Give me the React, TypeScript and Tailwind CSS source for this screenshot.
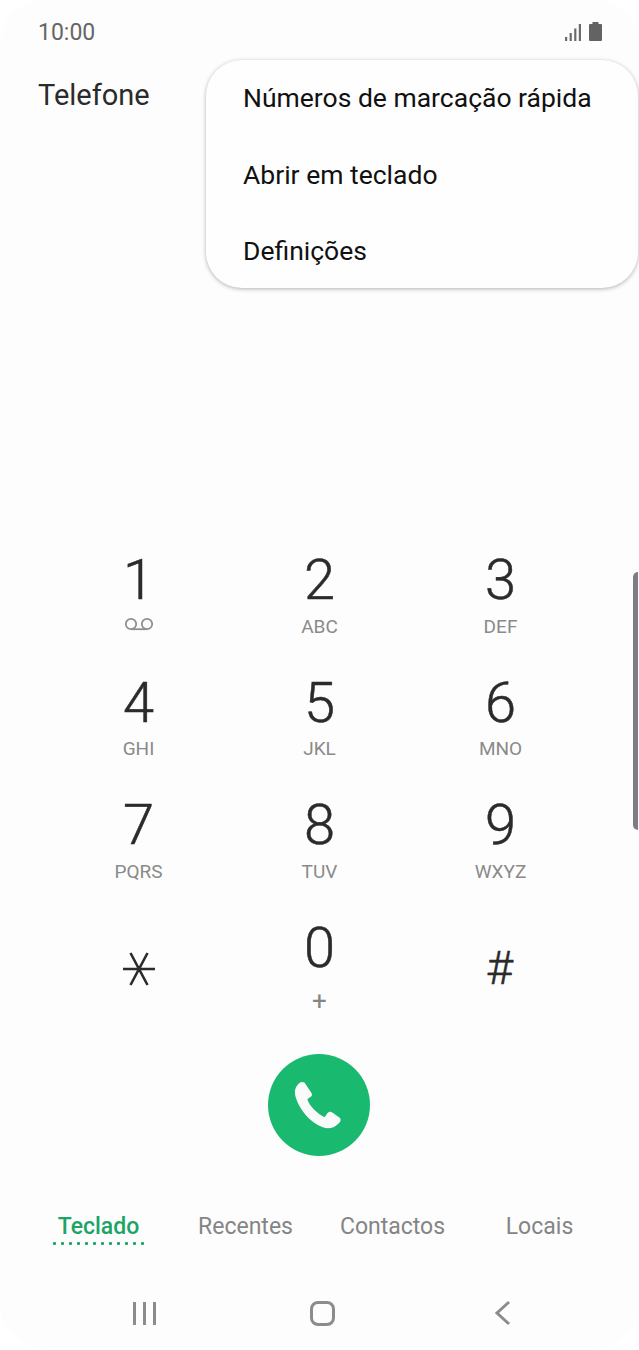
const keys = [
  { digit: '1', sub: '' },
  { digit: '2', sub: 'ABC' },
  { digit: '3', sub: 'DEF' },
  { digit: '4', sub: 'GHI' },
  { digit: '5', sub: 'JKL' },
  { digit: '6', sub: 'MNO' },
  { digit: '7', sub: 'PQRS' },
  { digit: '8', sub: 'TUV' },
  { digit: '9', sub: 'WXYZ' },
]

const tabs = ['Recentes', 'Contactos', 'Locais']
const dots = Array.from({ length: 12 }, (_, i) => i)

function Voicemail() {
  return (
    <svg className="-mt-[4px]" width="30" height="14" viewBox="0 0 30 14" fill="none" stroke="#8f8f8f" strokeWidth="1.8">
      <circle cx="7" cy="7" r="5.2" />
      <circle cx="23" cy="7" r="5.2" />
      <path d="M7 12.2h16" />
    </svg>
  )
}

function Star() {
  return (
    <svg width="34" height="36" viewBox="0 0 34 36" fill="none" stroke="#2b2b2b" strokeWidth="2.6">
      <path d="M1 18h32M8.5 2l17 32M25.5 2l-17 32" />
    </svg>
  )
}

function Handset() {
  return (
    <svg width="70" height="70" viewBox="0 0 210 210" fill="#fafafa">
      <path d="M36 52C42 38 54 32 62 38L82 68C86 74 84 78 78 82L70 88C76 108 100 132 122 142L130 130C134 124 140 124 146 128L168 144C172 150 170 156 162 162C150 174 134 178 116 172C76 156 44 116 34 78C32 68 32 60 36 52Z" />
    </svg>
  )
}

export default function App() {
  return (
    <div className="relative w-[639px] h-[1350px] overflow-hidden bg-white font-['Roboto',sans-serif]">
      <div className="flex flex-col h-[1348px] rounded-[44px] bg-[#fdfdfd]">
        {/* Status bar */}
        <div className="flex items-center justify-between h-[64px] pl-[38px] pr-[37px]">
          <span className="text-[23px] leading-none text-[#666666]">10:00</span>
          <div className="flex items-end gap-[8px] pb-[2px]">
            <svg width="16" height="17" viewBox="0 0 16 17" fill="#6b6b6b">
              <rect x="0" y="13" width="2.2" height="4" />
              <rect x="4.6" y="9" width="2.2" height="8" />
              <rect x="9.2" y="4.5" width="2.2" height="12.5" />
              <rect x="13.8" y="0" width="2.2" height="17" />
            </svg>
            <svg width="13" height="19" viewBox="0 0 13 19" fill="#636363">
              <path d="M3.5 0h6v2H12a1 1 0 0 1 1 1v15a1 1 0 0 1-1 1H1a1 1 0 0 1-1-1V3a1 1 0 0 1 1-1h2.5z" />
            </svg>
          </div>
        </div>

        <div className="pl-[38px] pt-[13px] h-[485px]">
          <span className="text-[29px] leading-[36px] text-[#2b2b2b]">Telefone</span>
        </div>

        {/* Keypad */}
        <div className="grid grid-cols-3 px-[48px]">
          {keys.map((k) => (
            <div key={k.digit} className="flex flex-col items-center h-[122.7px]">
              <span className="h-[62px] text-[56px] leading-[62px] font-light text-[#2b2b2b] [-webkit-text-stroke:0.5px_#2b2b2b]">
                {k.digit}
              </span>
              <span className="flex items-center h-[30px] text-[19px] leading-none text-[#8a8a8a]">
                {k.sub || <Voicemail />}
              </span>
            </div>
          ))}
          <div className="flex justify-center items-start pt-[34px] h-[122px]">
            <Star />
          </div>
          <div className="flex flex-col items-center h-[122px]">
            <span className="h-[62px] text-[56px] leading-[62px] font-light text-[#2b2b2b] [-webkit-text-stroke:0.5px_#2b2b2b]">
              0
            </span>
            <span className="flex items-center h-[30px] mt-[7px] text-[26px] leading-none text-[#858585]">+</span>
          </div>
          <div className="flex justify-center items-start pt-[26px] pr-[2px] h-[122px]">
            <span className="text-[47px] leading-[50px] font-light text-[#2b2b2b] [-webkit-text-stroke:0.4px_#2b2b2b]">#</span>
          </div>
        </div>

        {/* Call button */}
        <div className="flex justify-center pt-[15px] pr-[1px]">
          <div className="flex items-center justify-center w-[102px] h-[102px] rounded-full bg-[#1ab970]">
            <Handset />
          </div>
        </div>

        {/* Tabs */}
        <div className="flex mt-[56px] pl-[25px] pr-[26px]">
          <div className="flex-1 flex flex-col items-center h-[30px]">
            <span className="text-[23px] leading-[30px] font-medium text-[#1ba466]">Teclado</span>
            <div className="flex gap-[5px]">
              {dots.map((d) => (
                <div key={d} className="w-[3px] h-[3px] rounded-[1px] bg-[#1ba466]" />
              ))}
            </div>
          </div>
          {tabs.map((t) => (
            <div key={t} className="flex-1 text-center text-[23px] leading-[30px] text-[#858585]">
              {t}
            </div>
          ))}
        </div>

        {/* Navigation bar */}
        <div className="flex items-center mt-[57px] h-[28px] pl-[133px]">
          <div className="flex gap-[7px] w-[23px]">
            <div className="w-[3px] h-[23px] bg-[#8c8c8c]" />
            <div className="w-[3px] h-[23px] bg-[#8c8c8c]" />
            <div className="w-[3px] h-[23px] bg-[#8c8c8c]" />
          </div>
          <div className="ml-[154px] w-[25px] h-[25px] rounded-[8px] border-[3px] border-[#8c8c8c]" />
          <svg className="ml-[159px]" width="18" height="26" viewBox="0 0 18 26" fill="none" stroke="#8c8c8c" strokeWidth="3">
            <path d="M15 2L3 13l12 11" />
          </svg>
        </div>
      </div>

      {/* Overflow menu */}
      <div className="absolute left-[206px] top-[60px] w-[432px] h-[228px] rounded-[36px] bg-[#fefefe] pl-[37px] shadow-[0_1px_4px_rgba(0,0,0,0.3)]">
        {['Números de marcação rápida', 'Abrir em teclado', 'Definições'].map((item) => (
          <div key={item} className="flex items-center h-[76.5px] text-[26.5px] text-[#111111]">
            {item}
          </div>
        ))}
      </div>

      {/* Scroll handle */}
      <div className="absolute right-[1px] top-[572px] w-[5px] h-[258px] rounded-l-[5px] bg-[#7d7d85]" />
    </div>
  )
}
